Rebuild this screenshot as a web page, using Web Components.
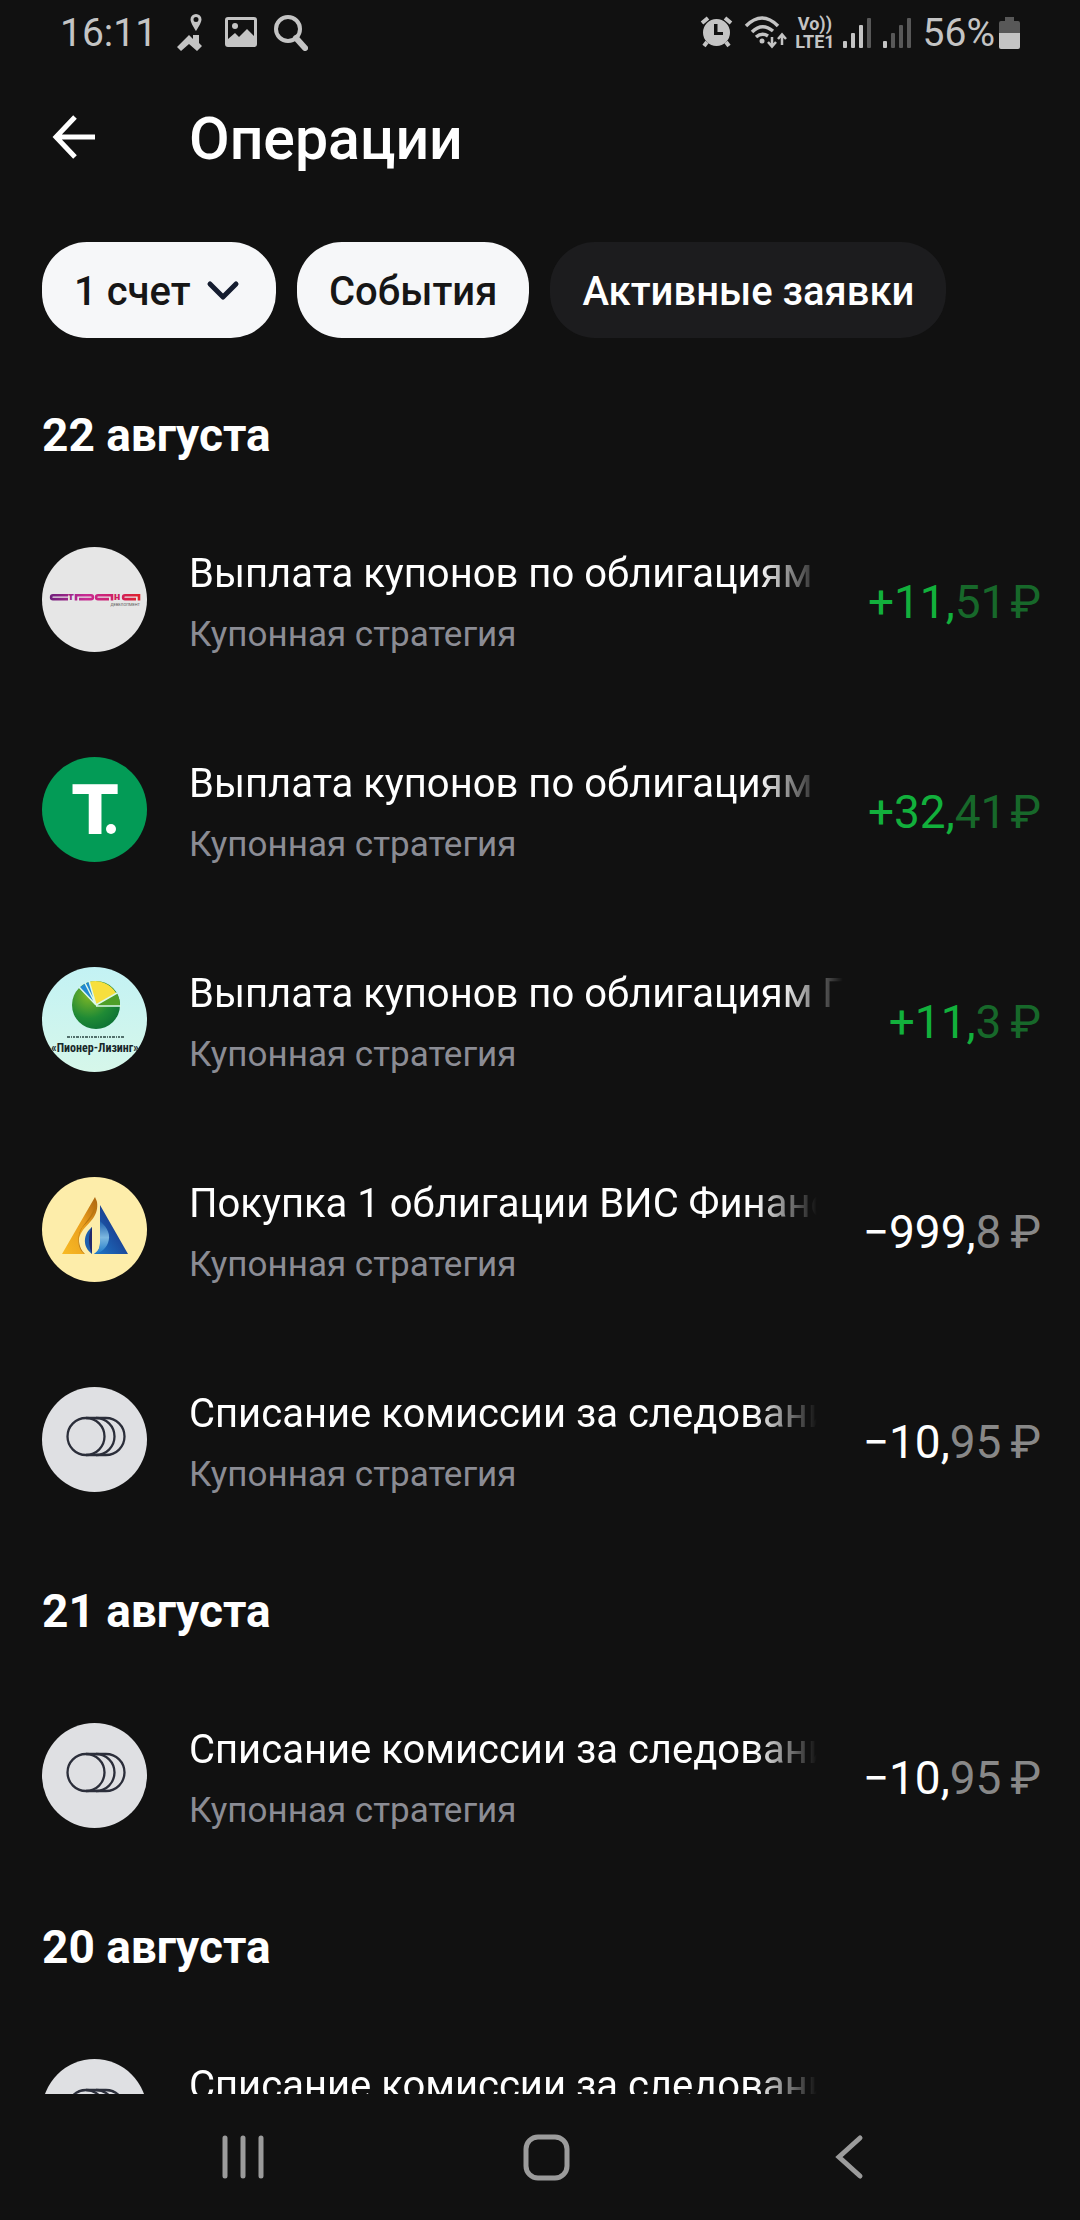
<!DOCTYPE html>
<html lang="ru">
<head>
<meta charset="utf-8">
<meta name="viewport" content="width=device-width, initial-scale=1">
<title>Операции</title>
<style>
body {
  margin: 0;
  background: #111;
  color: #fff;
  font-family: Roboto, "Liberation Sans", sans-serif;
}
</style>
</head>
<body>
<operations-app>
  <status-bar slot="status" time="16:11" battery="56"></status-bar>
  <page-header slot="header">Операции</page-header>

  <account-select slot="filters">1 счет</account-select>
  <filter-chip slot="filters" active>События</filter-chip>
  <filter-chip slot="filters">Активные заявки</filter-chip>

  <operation-day date="22 августа">
    <operation-row logo="strana" account="Купонная стратегия" amount="+11,51">Выплата купонов по облигациям</operation-row>
    <operation-row logo="tbank" account="Купонная стратегия" amount="+32,41">Выплата купонов по облигациям</operation-row>
    <operation-row logo="pioneer" account="Купонная стратегия" amount="+11,3">Выплата купонов по облигациям П</operation-row>
    <operation-row logo="vis" account="Купонная стратегия" amount="−999,8">Покупка 1 облигации ВИС Финанс</operation-row>
    <operation-row logo="fee" account="Купонная стратегия" amount="−10,95">Списание комиссии за следовани</operation-row>
  </operation-day>
  <operation-day date="21 августа">
    <operation-row logo="fee" account="Купонная стратегия" amount="−10,95">Списание комиссии за следовани</operation-row>
  </operation-day>
  <operation-day date="20 августа">
    <operation-row logo="fee" account="Купонная стратегия" amount="−10,95">Списание комиссии за следовани</operation-row>
  </operation-day>

  <system-nav slot="nav"></system-nav>
</operations-app>

<script>
// Round logos, all drawn on a 105x105 field
const LOGOS = {
  strana: `
    <defs>
      <linearGradient id="s" gradientUnits="userSpaceOnUse" x1="8" y1="0" x2="98" y2="0">
        <stop offset="0" stop-color="#6f1f7c"/>
        <stop offset=".4" stop-color="#c92a93"/>
        <stop offset=".75" stop-color="#cf1f63"/>
        <stop offset="1" stop-color="#e0232b"/>
      </linearGradient>
    </defs>
    <rect width="105" height="105" fill="#e6e6e6"/>
    <g fill="none" stroke="url(#s)" stroke-width="2.600">
      <path d="M26 48.300H11a1.900 1.900 0 0 0 0 3.800H26"/>
      <path d="M34 53.400V48.300H49a1.900 1.900 0 0 1 0 3.800H37"/>
      <path d="M70 53.400V48.300H56a1.900 1.900 0 0 0 0 3.800H67"/>
      <path d="M97 53.400V48.300H83a1.900 1.900 0 0 0 0 3.800H94"/>
    </g>
    <g font-weight="900" font-size="11" text-anchor="middle">
      <text x="29" y="53" fill="#a32688">т</text>
      <text x="75" y="53" fill="#cf1f63">н</text>
    </g>
    <text x="98" y="59" font-size="4" text-anchor="end" fill="#555">ДЕВЕЛОПМЕНТ</text>`,
  tbank: `
    <rect width="105" height="105" fill="#039b56"/>
    <text x="53" y="77" font-family="'DejaVu Sans', sans-serif" font-weight="700" font-size="67" text-anchor="middle" fill="#fff">T</text>
    <circle cx="69" cy="72" r="5" fill="#fff"/>`,
  pioneer: `
    <defs>
      <linearGradient id="b" x1="0" y1="0" x2="0" y2="1">
        <stop offset="0" stop-color="#c3f2f4"/>
        <stop offset="1" stop-color="#d6f7ea"/>
      </linearGradient>
      <radialGradient id="g" cx=".35" cy=".3" r=".8">
        <stop offset="0" stop-color="#7fb726"/>
        <stop offset=".6" stop-color="#1f8a35"/>
        <stop offset="1" stop-color="#0b6f35"/>
      </radialGradient>
    </defs>
    <rect width="105" height="105" fill="url(#b)"/>
    <circle cx="54" cy="38" r="24" fill="url(#g)"/>
    <path d="M54 38 78 39A24 24 0 0 0 74 25Z" fill="#4f9f28"/>
    <path d="M54 38 47 15A24 24 0 0 1 74 26Z" fill="#f7df3d"/>
    <path d="M54 38 37 21A24 24 0 0 1 47 15Z" fill="#2089d2"/>
    <path d="M54 38 37 20M54 38 43 16M54 38 47 14M54 38 75 26M54 39H79" stroke="#dcf8e8" stroke-width="1.500"/>
    <path d="M25 70H83" stroke="#52706c" stroke-width="2" stroke-dasharray="3 1 1 1 2 1"/>
    <text x="53" y="85" font-family="'Liberation Sans Narrow', 'Roboto Condensed', Roboto" font-weight="700" font-size="12" text-anchor="middle" fill="#18262a">«Пионер-Лизинг»</text>`,
  vis: `
    <defs>
      <linearGradient id="o" x1="0" y1="1" x2="1" y2="0">
        <stop offset="0" stop-color="#f8bb25"/>
        <stop offset=".6" stop-color="#e89c1d"/>
        <stop offset="1" stop-color="#a8610f"/>
      </linearGradient>
      <linearGradient id="n" x1="0" y1="1" x2="1" y2="0">
        <stop offset="0" stop-color="#1c79c9"/>
        <stop offset=".5" stop-color="#1b4a9c"/>
        <stop offset="1" stop-color="#22286b"/>
      </linearGradient>
      <linearGradient id="d" x1="0" y1="0" x2="0" y2="1">
        <stop offset="0" stop-color="#1d5fae"/>
        <stop offset=".5" stop-color="#7db8e0"/>
        <stop offset="1" stop-color="#1c79c9"/>
      </linearGradient>
    </defs>
    <rect width="105" height="105" fill="#fdedaa"/>
    <path d="M53 20 20 77H43C36 72 34 62 41 53 48 45 57 38 55 25Z" fill="url(#o)"/>
    <path d="M54 22C56 36 46 44 40 51 35 59 36 71 43 77 35 73 35 59 39 52 45 43 53 36 54 22Z" fill="#b9770f"/>
    <path d="M58 28 86 77H52C57 74 58 70 58 65Z" fill="url(#n)"/>
    <path d="M58 44C66 51 69 58 66 66 63 73 58 76 52 77 57 74 58 70 58 65Z" fill="url(#d)"/>
    <path d="M50 50C41 57 40 70 50 77Z" fill="#1d5fae"/>
    <path d="M50 50C46 57 46 68 50 77Z" fill="#23296c"/>`,
  fee: `
    <rect width="105" height="105" fill="#dfe0e3"/>
    <g fill="none" stroke="#2b2e3a" stroke-width="2.300">
      <circle cx="44" cy="49.500" r="18.500"/>
      <path d="M44 31H54a18.500 18.500 0 0 1 0 37H44"/>
      <path d="M54 31H64a18.500 18.500 0 0 1 0 37H54"/>
    </g>`,
};

class OperationsApp extends HTMLElement {
  connectedCallback() {
    this.attachShadow({mode: 'open'}).innerHTML = `
<style>
:host {
  display: flex;
  flex-direction: column;
  height: 100vh;
}
.filters {
  display: flex;
  gap: 21px;
  padding: 31px 42px;
}
main {
  flex: 1;
  min-height: 0;
  overflow: hidden;
}
</style>
<slot name="status"></slot>
<slot name="header"></slot>
<div class="filters"><slot name="filters"></slot></div>
<main><slot></slot></main>
<slot name="nav"></slot>`;
  }
}

class StatusBar extends HTMLElement {
  connectedCallback() {
    const battery = this.getAttribute('battery');
    this.attachShadow({mode: 'open'}).innerHTML = `
<style>
:host {
  display: flex;
  justify-content: space-between;
  height: 66px;
  padding: 0 60px;
  box-sizing: border-box;
  color: #c4c4c4;
  font-size: 39px;
  line-height: 68px;
}
.left, .right, .battery {
  display: flex;
  align-items: center;
}
.left { gap: 17px; }
.right { gap: 8px; }
.battery { gap: 4px; }
svg {
  display: block;
  fill: currentColor;
}
.volte {
  font-size: 18px;
  font-weight: 700;
  line-height: 18px;
  text-align: center;
}
.dim { opacity: .4; }
</style>
<div class="left">
  <span>${this.getAttribute('time')}</span>
  <svg width="34" height="38" viewBox="-3 0 34 38">
    <path fill-rule="evenodd" d="M19 0a5.500 5.500 0 0 1 5.500 5.500C24.500 9 19 17 19 17S13.500 9 13.500 5.500A5.500 5.500 0 0 1 19 0Zm0 3a2.500 2.500 0 1 0 0 5 2.500 2.500 0 0 0 0-5Z"/>
    <path d="M0 33 12 21 16 25V21H22V29L25 32 20 37 12 30 4 37Z"/>
  </svg>
  <svg width="32" height="34" viewBox="0 0 32 34">
    <path fill-rule="evenodd" d="M3 1H29a3 3 0 0 1 3 3V28a3 3 0 0 1-3 3H3a3 3 0 0 1-3-3V4A3 3 0 0 1 3 1ZM3 4V23L10 17 14 21 22 13 29 20V4Z"/>
    <circle cx="10" cy="10" r="3"/>
  </svg>
  <svg width="34" height="36" viewBox="0 0 34 36">
    <circle cx="14" cy="14" r="12" fill="none" stroke="currentColor" stroke-width="4"/>
    <path d="M22 23 31 33" stroke="currentColor" stroke-width="6" stroke-linecap="round"/>
  </svg>
</div>
<div class="right">
  <svg width="36" height="36" viewBox="0 0 36 36">
    <path fill-rule="evenodd" d="M16.500 4a13.500 13.500 0 1 1 0 27 13.500 13.500 0 0 1 0-27ZM14 9V20H23V17H17.500V9Z"/>
    <path d="M2 8 8 3M25 3 31 8" stroke="currentColor" stroke-width="4"/>
    <path d="M7 27 4 31M26 27 29 31" stroke="currentColor" stroke-width="4"/>
  </svg>
  <svg width="43" height="36" viewBox="0 0 43 36">
    <g fill="none" stroke="currentColor" stroke-width="3.500">
      <path d="M2 11Q18 -5 34 11"/>
      <path d="M8 17Q18 7 29 16"/>
      <path d="M12 22Q18 17 24 21"/>
    </g>
    <circle cx="18" cy="26" r="2.500"/>
    <path d="M28 22V31M24 27 28 31.500 32 27M38 30V20M34 24 38 19.500 42 24" fill="none" stroke="currentColor" stroke-width="2.500"/>
  </svg>
  <div class="volte">Vo))<br>LTE1</div>
  ${this.signal(3)}
  ${this.signal(1)}
  <div class="battery">
    <span>${battery}%</span>
    <svg width="21" height="34" viewBox="0 0 21 34">
      <path class="dim" d="M6 1H15V5H19a2 2 0 0 1 2 2V17H0V7A2 2 0 0 1 2 5H6Z"/>
      <path d="M0 17H21V31a2 2 0 0 1-2 2H2a2 2 0 0 1-2-2Z"/>
    </svg>
  </div>
</div>`;
  }

  // Four bars, the ones above the given level are dimmed
  signal(level) {
    const bars = [7, 15, 23, 30].map((height, i) =>
      `<rect x="${i * 8}" y="${31 - height}" width="4" height="${height}" rx="1" ${i < level ? '' : 'class="dim"'}/>`);
    return `<svg width="32" height="32" viewBox="0 0 32 32">${bars.join('')}</svg>`;
  }
}

class PageHeader extends HTMLElement {
  connectedCallback() {
    this.attachShadow({mode: 'open'}).innerHTML = `
<style>
:host {
  display: flex;
  align-items: center;
  gap: 84px;
  height: 145px;
  padding: 0 42px;
}
button {
  padding: 0;
  border: 0;
  background: none;
  color: inherit;
}
svg { display: block; }
h1 {
  margin: 0;
  font-size: 59px;
  line-height: 68px;
  font-weight: 500;
}
</style>
<button type="button" aria-label="Назад">
  <svg width="63" height="63" viewBox="0 0 63 63" fill="none" stroke="currentColor" stroke-width="5">
    <path d="M53 30H15M33 10 14 30 33 50"/>
  </svg>
</button>
<h1><slot></slot></h1>`;
  }
}

const CHIP_CSS = `
.chip {
  display: flex;
  align-items: center;
  height: 96px;
  padding: 4px 32px 0;
  box-sizing: border-box;
  border: 0;
  border-radius: 45px;
  background: #1c1c1e;
  color: #fff;
  font: 500 40px/48px Roboto, "Liberation Sans", sans-serif;
  white-space: nowrap;
}
.chip.active {
  background: #f6f7f9;
  color: #161616;
}`;

class FilterChip extends HTMLElement {
  connectedCallback() {
    const active = this.hasAttribute('active');
    this.attachShadow({mode: 'open'}).innerHTML = `
<style>
:host { display: block; }
${CHIP_CSS}
</style>
<button type="button" class="chip ${active ? 'active' : ''}" aria-pressed="${active}"><slot></slot></button>`;
  }
}

class AccountSelect extends HTMLElement {
  connectedCallback() {
    this.attachShadow({mode: 'open'}).innerHTML = `
<style>
:host { display: block; }
${CHIP_CSS}
.chip { gap: 11px; }
select {
  appearance: none;
  margin: 0;
  padding: 0;
  border: 0;
  background: none;
  color: inherit;
  font: inherit;
}
svg { display: block; }
</style>
<label class="chip active">
  <select aria-label="Счет"><option>${this.textContent.trim()}</option></select>
  <svg width="42" height="42" viewBox="0 0 42 42" fill="none" stroke="#151d30" stroke-width="5" stroke-linecap="round" stroke-linejoin="round">
    <path d="M8 13 21 26 34 13"/>
  </svg>
</label>`;
  }
}

class OperationDay extends HTMLElement {
  connectedCallback() {
    this.attachShadow({mode: 'open'}).innerHTML = `
<style>
:host { display: block; }
h2 {
  margin: 0;
  padding: 39px 42px 33px;
  font-size: 46px;
  line-height: 54px;
  font-weight: 700;
}
</style>
<h2>${this.getAttribute('date')}</h2>
<slot></slot>`;
  }
}

class OperationRow extends HTMLElement {
  connectedCallback() {
    this.attachShadow({mode: 'open'}).innerHTML = `
<style>
:host {
  display: flex;
  gap: 42px;
  padding: 52px 39px 48px 42px;
}
.logo {
  flex: none;
  width: 105px;
  height: 105px;
  border-radius: 50%;
}
.text {
  flex: 1;
  min-width: 0;
  padding-top: 3px;
}
.title {
  overflow: hidden;
  margin-bottom: 15px;
  font-size: 40px;
  line-height: 48px;
  white-space: nowrap;
  -webkit-mask-image: linear-gradient(to left, transparent, #000 63px);
  mask-image: linear-gradient(to left, transparent, #000 63px);
}
.account {
  color: #8b8c94;
  font-size: 35px;
  line-height: 44px;
}
.amount {
  align-self: center;
  padding-left: 4px;
  font-size: 46px;
  line-height: 54px;
  white-space: nowrap;
}
.minor { color: #888; }
.income { color: #12b03c; }
.income .minor { color: #17682a; }
.currency { margin-left: 9px; }
.currency.tight { margin-left: 4px; }
</style>
<svg class="logo" viewBox="0 0 105 105" aria-hidden="true">${LOGOS[this.getAttribute('logo')]}</svg>
<div class="text">
  <div class="title"><slot></slot></div>
  <div class="account">${this.getAttribute('account')}</div>
</div>
${this.renderAmount(this.getAttribute('amount'))}`;
  }

  // The part after the comma and the currency sign are dimmed
  renderAmount(amount) {
    const [major, minor] = amount.split(',');
    const income = amount.startsWith('+') ? 'income' : '';
    // A trailing 1 already has white space on its right side
    const tight = minor.endsWith('1') ? 'tight' : '';
    return `<div class="amount ${income}">${major},<span class="minor">${minor}<span class="currency ${tight}">₽</span></span></div>`;
  }
}

class SystemNav extends HTMLElement {
  connectedCallback() {
    this.attachShadow({mode: 'open'}).innerHTML = `
<style>
:host {
  display: grid;
  grid-template-columns: repeat(3, 1fr);
  height: 126px;
  padding: 0 80px 0 92px;
  background: #111;
}
button {
  display: grid;
  place-items: center;
  padding: 0;
  border: 0;
  background: none;
  color: #9b9b9b;
}
svg {
  fill: none;
  stroke: currentColor;
  stroke-width: 5px;
}
</style>
<button type="button" aria-label="Недавние">
  <svg width="48" height="48" viewBox="0 0 48 48" stroke-linecap="round"><path d="M6 5V43M24 5V43M42 5V43"/></svg>
</button>
<button type="button" aria-label="Главный экран">
  <svg width="48" height="48" viewBox="0 0 48 48"><rect x="4" y="4" width="41" height="41" rx="12"/></svg>
</button>
<button type="button" aria-label="Назад">
  <svg width="48" height="48" viewBox="0 0 48 48" stroke-linecap="round"><path d="M35 5 14 24 35 43"/></svg>
</button>`;
  }
}

customElements.define('operations-app', OperationsApp);
customElements.define('status-bar', StatusBar);
customElements.define('page-header', PageHeader);
customElements.define('account-select', AccountSelect);
customElements.define('filter-chip', FilterChip);
customElements.define('operation-day', OperationDay);
customElements.define('operation-row', OperationRow);
customElements.define('system-nav', SystemNav);
</script>
</body>
</html>
